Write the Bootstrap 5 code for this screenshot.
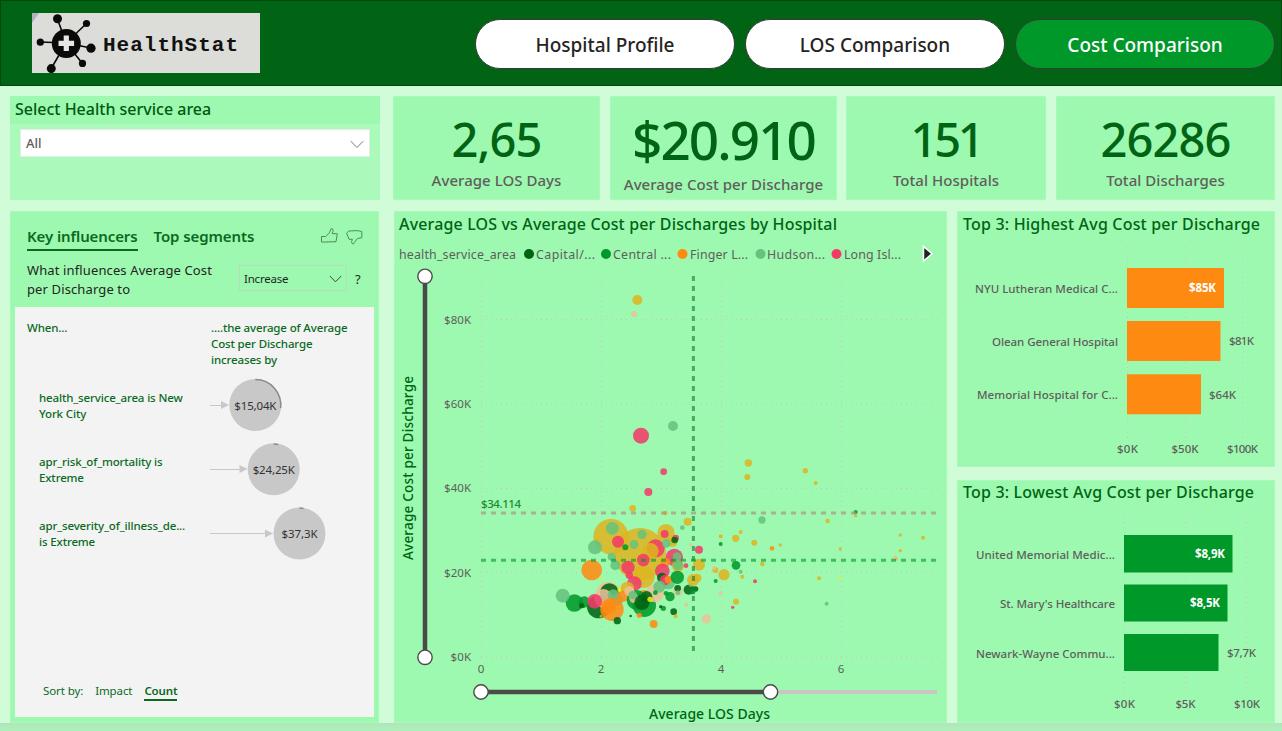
<!DOCTYPE html>
<html lang="en">
<head>
<meta charset="utf-8">
<meta name="viewport" content="width=device-width, initial-scale=1">
<title>HealthStat - Cost Comparison</title>
<link href="https://cdn.jsdelivr.net/npm/bootstrap@5.3.0/dist/css/bootstrap.min.css" rel="stylesheet">
<style>
  :root { --deep: #006414; --panel: #9cf9af; --muted: #605e5c; }
  body { background: #d0fcd8; font-family: "Noto Sans", "Open Sans", sans-serif; font-weight: 500; color: var(--deep); width: 1282px; height: 731px; overflow: hidden; }
  .topbar { height: 86px; background: var(--deep); border: 1px solid #004a10; padding: 0 6px 0 31px; }
  .brand-box { width: 228px; height: 60px; background: #dcdcd8; }
  .pill { width: 260px; height: 50px; border: 1px solid #3a3a3a; border-radius: 25px; font-size: 19px; line-height: 26px; font-weight: 550; color: #252423; background: #fff; padding: 12px 0 0; letter-spacing: 0; }
  .pill:hover { background: #fff; color: #252423; }
  .pill.current { background: #009829; color: #fff; }
  .tile { background: var(--panel); border: 1px solid #a8fab8; }
  .tile-title { font-size: 16px; line-height: 26px; padding-left: 5px; white-space: nowrap; font-weight: 550; }
  .slicer { width: 370px; height: 104px; background: #abfabc; }
  .slicer .tile-title { height: 28px; background: var(--panel); color: #005a12; }
  .picker { height: 28px; margin: 5px 10px 0; background: #fff; border: 1px solid #e3ece5; padding: 2px 5px 0; font-size: 13px; color: var(--muted); font-weight: 500; }
  .kpi { height: 104px; padding-top: 9px; text-align: center; }
  .kpi b { display: block; font-size: 47px; line-height: 67px; letter-spacing: -.9px; font-weight: 550; }
  .kpi b.tight { letter-spacing: -3.2px; }
  .kpi span { display: block; font-size: 15px; line-height: 18px; letter-spacing: .04px; font-weight: 550; color: var(--muted); margin-top: -2px; }
  .kpi.wide b { font-size: 53px; line-height: 68px; letter-spacing: -1.9px; }
  .kpi.wide span { margin-top: 1px; }
  .influence { width: 369px; height: 512px; padding: 0 4px 4px; }
  .tabline { height: 44px; padding: 12px 11px 0 12px; }
  .tabline a { font-size: 15px; line-height: 24px; color: #0b6a1e; text-decoration: none; font-weight: 600; letter-spacing: -.1px; height: 27px; }
  .tabline a.on { border-bottom: 2px solid #0b6a1e; }
  .question { height: 51px; padding: 5px 11px 0 12px; font-size: 13px; line-height: 19px; color: #252423; font-weight: 400; letter-spacing: .12px; }
  .combo { width: 108px; height: 26px; border: 1px solid #b7dcbd; font-size: 11.5px; letter-spacing: -.2px; padding: 1px 4px 0 4px; margin: 4px 0 0 -1px; }
  .sheet { height: 410px; background: #f3f3f3; font-size: 11.5px; line-height: 16px; color: #0b6a1e; padding: 13px 12px 0; font-weight: 550; letter-spacing: -.14px; }
  .heads { height: 53px; }
  .factor { height: 64.2px; }
  .factor .what { width: 171px; padding: 17px 0 0 12px; white-space: nowrap; }
  .sorter { padding: 117px 0 0 16px; font-weight: 400; letter-spacing: -.1px; column-gap: 12px; }
  .sorter u { text-decoration: none; border-bottom: 2px solid #0b6a1e; font-weight: 600; padding-bottom: 0; letter-spacing: -.15px; }
  .scatter { width: 553px; height: 512px; }
  .side { width: 318px; }
  svg text { font-family: "Noto Sans", "Open Sans", sans-serif; }
  svg.plot { display: block; margin: -1px; }
  .head { font-size: 16px; font-weight: 550; fill: var(--deep); }
  .axis { font-size: 11.5px; fill: var(--muted); font-weight: 400; }
  .axis.med { font-weight: 550; }
  .legend { font-size: 12.4px; fill: var(--muted); font-weight: 400; }
  .dots { stroke: #c8c6c4; stroke-width: 1; stroke-dasharray: 1 4; fill: none; }
  .pagefoot { height: 8px; background: linear-gradient(#b0e4bb, #acf2ba); }
</style>
</head>
<body>
<header class="topbar d-flex align-items-center justify-content-between">
  <div class="brand-box">
    <svg width="228" height="60" viewBox="32 13 228 60">
      <path d="M32 13h7l-7 10z" fill="#aab4bd"/>
      <g stroke="#0a0a0a" stroke-width="1.6"><path d="M66 43 57.500 19M66 43 86.500 23.500M66 43 40 42M66 43 91 48M66 43 82.500 63.500M66 43 51.500 68"/></g>
      <g fill="#0a0a0a"><circle cx="66.300" cy="43.500" r="14.500"/><circle cx="57.500" cy="18.800" r="4.500"/><circle cx="86.500" cy="23.500" r="3.600"/><circle cx="40.300" cy="42.200" r="3.600"/><circle cx="91" cy="48.200" r="4.600"/><circle cx="82.500" cy="63.400" r="3.600"/><circle cx="51.300" cy="68.600" r="4.500"/></g>
      <path d="M63.700 35.500h5.200v5.200h5.200v5.200h-5.200v5.200h-5.200v-5.200h-5.200v-5.200h5.200z" fill="#e6e6e2"/>
      <text x="103" y="51" textLength="135" font-size="21" font-weight="700" fill="#111" style="font-family:'Courier New','Liberation Mono',monospace">HealthStat</text>
    </svg>
  </div>
  <nav class="d-flex" style="gap:10px;padding-top:2px">
    <a class="btn pill" href="#">Hospital Profile</a>
    <a class="btn pill" href="#">LOS Comparison</a>
    <a class="btn pill current" href="#">Cost Comparison</a>
  </nav>
</header>

<main class="d-flex flex-column" style="padding:10px 7px 0 10px;height:637px;gap:11px">
  <div class="d-flex">
    <section class="slicer">
      <div class="tile-title">Select Health service area</div>
      <div class="picker d-flex justify-content-between align-items-center">
        <span>All</span>
        <svg width="14" height="9" viewBox="0 0 14 9"><path d="M.8 1.200 7 7.500 13.200 1.200" fill="none" stroke="#777" stroke-width="1"/></svg>
      </div>
    </section>
    <div class="tile kpi" style="width:207px;margin-left:13px"><b>2,65</b><span>Average LOS Days</span></div>
    <div class="tile kpi wide" style="width:227px;margin-left:10px"><b>$20.910</b><span>Average Cost per Discharge</span></div>
    <div class="tile kpi" style="width:200px;margin-left:9px"><b class="tight">151</b><span>Total Hospitals</span></div>
    <div class="tile kpi" style="width:219px;margin-left:10px"><b>26286</b><span>Total Discharges</span></div>
  </div>

  <div class="d-flex">
    <section class="tile influence">
      <div class="tabline d-flex">
        <a class="on" href="#">Key influencers</a>
        <a href="#" class="ms-3">Top segments</a>
        <svg class="ms-auto" style="margin-top:2px" width="43" height="20" viewBox="320 225 43 20" fill="none" stroke="#4f8a59" stroke-width="1">
          <path d="M321.500 235.500h4.200l3.600-3.600 1.900-4.400c2.200 0 2.400 2.200 1 5.200h5.100l-1.300 8-10.300.3h-4.200z"/>
          <path d="M361.800 230.500v6.200l-4.300.8-3.300 4.200-.8 1.300c-2.300-.2-2.200-2-1-4.600l-3.400-.2-2.500-6 2.400-2.200 8.500-.4z"/>
        </svg>
      </div>
      <div class="question d-flex">
        <div style="width:213px">What influences Average Cost<br>per Discharge to</div>
        <div class="combo d-flex justify-content-between align-items-center"><span>Increase</span>
          <svg width="13" height="8" viewBox="0 0 13 8"><path d="M.8 1 6.500 6.800 12.200 1" fill="none" stroke="#444"/></svg></div>
        <span style="padding:9px 0 0 8px">?</span>
      </div>
      <div class="sheet">
        <div class="heads d-flex"><div style="width:184px">When...</div><div>....the average of Average<br>Cost per Discharge<br>increases by</div></div>
        <div class="factor d-flex"><div class="what">health_service_area is New<br>York City</div>
          <svg width="150" height="64" viewBox="198 373 150 64"><path d="M210 405.500h12" stroke="#c8c8c8"/><path d="M221 401v8l8-4z" fill="#c8c8c8"/><circle cx="255.300" cy="405" r="26" fill="#c8c8c8"/><path d="M255.300 379.600a25.400 25.400 0 0 1 25.300 28.500" fill="none" stroke="#8b8b8b" stroke-width="1.500"/><text x="255.300" y="409.500" text-anchor="middle" textLength="42" font-size="11.500" font-weight="400" fill="#333">$15,04K</text></svg></div>
        <div class="factor d-flex"><div class="what">apr_risk_of_mortality is<br>Extreme</div>
          <svg width="150" height="64" viewBox="198 437 150 64"><path d="M210 469.500h30" stroke="#c8c8c8"/><path d="M239.500 465v8l8-4z" fill="#c8c8c8"/><circle cx="273.700" cy="469.300" r="26" fill="#c8c8c8"/><path d="M273.700 444a25.400 25.400 0 0 1 4.500.4" fill="none" stroke="#8b8b8b" stroke-width="1.500"/><text x="273.700" y="473.700" text-anchor="middle" textLength="42" font-size="11.500" font-weight="400" fill="#333">$24,25K</text></svg></div>
        <div class="factor d-flex"><div class="what">apr_severity_of_illness_de...<br>is Extreme</div>
          <svg width="150" height="64" viewBox="198 501 150 64"><path d="M210 533.500h56" stroke="#c8c8c8"/><path d="M265 529.500v8l8-4z" fill="#c8c8c8"/><circle cx="299.500" cy="533.500" r="26" fill="#c8c8c8"/><path d="M299.500 508.100a25.400 25.400 0 0 1 4 .4" fill="none" stroke="#8b8b8b" stroke-width="1.500"/><text x="299.500" y="538" text-anchor="middle" textLength="36" font-size="11.500" font-weight="400" fill="#333">$37,3K</text></svg></div>
        <div class="sorter d-flex"><span>Sort by:</span><span>Impact</span><u>Count</u></div>
      </div>
    </section>

    <section class="tile scatter" style="margin-left:15px">
      <svg class="plot" id="scatter" width="553" height="512" viewBox="394 211 553 512">
        <text class="head" x="399" y="230" textLength="438">Average LOS vs Average Cost per Discharges by Hospital</text>
        <g class="legend">
          <text x="399" y="259" textLength="117">health_service_area</text>
          <text x="536" y="259" textLength="59">Capital/...</text>
          <text x="613" y="259" textLength="58">Central ...</text>
          <text x="690" y="259" textLength="58">Finger L...</text>
          <text x="767" y="259" textLength="58">Hudson...</text>
          <text x="844" y="259" textLength="57">Long Isl...</text>
        </g>
        <circle cx="529" cy="254" r="5" fill="#006414"/><circle cx="606" cy="254" r="5" fill="#009829"/><circle cx="682.500" cy="254" r="5" fill="#ff8a12"/><circle cx="760.500" cy="254" r="5" fill="#66c27e"/><circle cx="836.500" cy="254" r="5" fill="#f23a69"/>
        <path d="M923.500 246.500v14.500l8.500-7.200z" fill="#222" stroke="#fff" stroke-width="1.500"/>
        <g class="dots">
          <path d="M481.500 281v376M601.500 281v376M721.500 281v376M841.500 281v376"/>
          <path d="M481 319.500h457M481 404.500h457M481 488.500h457M481 572.500h457M481 657.500h457"/>
        </g>
        <g class="axis" text-anchor="end">
          <text x="471" y="324" textLength="27">$80K</text><text x="471" y="408" textLength="27">$60K</text><text x="471" y="492" textLength="27">$40K</text><text x="471" y="577" textLength="27">$20K</text><text x="471" y="661" textLength="20.500">$0K</text>
        </g>
        <g class="axis" text-anchor="middle"><text x="481" y="673">0</text><text x="601" y="673">2</text><text x="721" y="673">4</text><text x="841" y="673">6</text></g>
        <g id="bubbles" fill-opacity=".87"></g>
        <g fill="none" stroke-width="3">
          <path d="M693.400 276v380" stroke="#0c7a2c" stroke-opacity=".6" stroke-dasharray="5 5"/>
          <path d="M481 513h457" stroke="#b08a80" stroke-opacity=".65" stroke-dasharray="5 5"/>
          <path d="M481 560.300h457" stroke="#009829" stroke-opacity=".6" stroke-dasharray="5 5"/>
        </g>
        <text x="481" y="508" font-size="11.500" font-weight="550" fill="#1d8a34" textLength="40">$34.114</text>
        <path d="M425 276v381" stroke="#4a4a48" stroke-width="4.500"/>
        <path d="M481 692h290" stroke="#4a4a48" stroke-width="4.500"/><path d="M771 692h166" stroke="#c8c6c4" stroke-width="4"/>
        <g fill="#fff" stroke="#4a4a48" stroke-width="1.400"><circle cx="425" cy="276.300" r="7.200"/><circle cx="425" cy="657.300" r="7.200"/><circle cx="481" cy="692" r="7.200"/><circle cx="770.500" cy="692" r="7.200"/></g>
        <text x="709.500" y="719" text-anchor="middle" font-size="14" font-weight="550" fill="#006414" textLength="121">Average LOS Days</text>
        <text transform="translate(413 468) rotate(-90)" text-anchor="middle" font-size="13.500" font-weight="550" fill="#006414" textLength="184">Average Cost per Discharge</text>
      </svg>
    </section>

    <div class="side" style="margin-left:10px">
      <section class="tile" style="height:256px">
        <svg class="plot" width="318" height="256" viewBox="957 211 318 256">
          <text class="head" x="963" y="230" textLength="297">Top 3: Highest Avg Cost per Discharge</text>
          <path class="dots" d="M1127.500 247v191M1185.500 247v191M1242.500 247v191"/>
          <g fill="#ff8a12"><path d="M1127 268h97v40h-97zM1127 321h93.500v40h-93.500zM1127 374.300h74v40h-74z"/></g>
          <g class="axis med" text-anchor="end"><text x="1118" y="293" textLength="143">NYU Lutheran Medical C...</text><text x="1118" y="346" textLength="126">Olean General Hospital</text><text x="1118" y="399" textLength="141">Memorial Hospital for C...</text></g>
          <text class="axis" x="1216" y="292" text-anchor="end" textLength="27" style="fill:#fff;font-weight:700">$85K</text>
          <text class="axis med" x="1229" y="345" textLength="25">$81K</text><text class="axis med" x="1209" y="399" textLength="27">$64K</text>
          <g class="axis med" text-anchor="middle"><text x="1127.500" y="453" textLength="21">$0K</text><text x="1185" y="453" textLength="27">$50K</text><text x="1242.500" y="453" textLength="31">$100K</text></g>
        </svg>
      </section>
      <section class="tile" style="height:243px;margin-top:13px">
        <svg class="plot" width="318" height="243" viewBox="957 480 318 243">
          <text class="head" x="963" y="498" textLength="291">Top 3: Lowest Avg Cost per Discharge</text>
          <path class="dots" d="M1124.500 517v177M1185.500 517v177M1246.500 517v177"/>
          <g fill="#009829"><path d="M1124 535h108.500v37.500h-108.500zM1124 584.500h103.500v37h-103.500zM1124 634h94.500v37h-94.500z"/></g>
          <g class="axis med" text-anchor="end"><text x="1115" y="559" textLength="139">United Memorial Medic...</text><text x="1115" y="608" textLength="115">St. Mary's Healthcare</text><text x="1115" y="658" textLength="139">Newark-Wayne Commu...</text></g>
          <g class="axis" text-anchor="end" style="fill:#fff;font-weight:700"><text x="1225" y="558" textLength="30">$8,9K</text><text x="1220" y="607" textLength="30">$8,5K</text></g>
          <text class="axis med" x="1227" y="657" textLength="29">$7,7K</text>
          <g class="axis med" text-anchor="middle"><text x="1124.500" y="708" textLength="21">$0K</text><text x="1185.500" y="708" textLength="20">$5K</text><text x="1247" y="708" textLength="26">$10K</text></g>
        </svg>
      </section>
    </div>
  </div>
</main>
<footer class="pagefoot"></footer>

<script src="https://cdn.jsdelivr.net/npm/bootstrap@5.3.0/dist/js/bootstrap.bundle.min.js"></script>
<script>
  // One letter per health service area
  const colours = { y: '#deb421', h: '#66c27e', L: '#f23a69', C: '#009829', D: '#006414', F: '#ff8a12', p: '#ecc09a', b: '#f0f000' };
  // Bubble groups: origin in chart units, then x, y, radius in thirds of a unit
  const groups = [
    { x: 540, y: 480, d: 'y 213 170 53;y 300 222 78;y 310 290 34;y 378 158 26;y 397 186 15;h 217 145 19;h 165 202 21;L 234 185 18;C 256 202 9;h 306 163 14;h 282 193 13;L 374 162 12;L 347 205 27;y 331 214 25;L 310 240 19;h 215 230 12;h 226 256 15;L 264 262 20;L 268 286 11;L 283 311 22;y 262 325 20;L 407 174 10;D 404 180 10;h 379 190 13;L 403 232 26;y 414 258 18;h 411 230 13;h 414 256 15;F 376 248 14;L 367 273 22;D 366 293 15;h 385 308 20;L 375 300 16;F 385 299 11;C 412 292 20;F 155 270 31;p 205 340 35;D 208 338 28;D 176 380 35;p 190 355 28;h 220 345 17;h 232 358 18;C 103 369 26;C 133 366 17;D 125 377 8;h 68 347 21;L 164 364 22;F 216 388 35;F 207 383 21;y 183 409 4;F 249 349 17;D 232 422 11;F 312 350 20;C 290 360 30;C 313 376 35;p 282 355 14;p 268 334 15;p 345 340 27;h 278 345 13;h 358 320 18;C 346 338 7;D 306 367 23;D 320 350 17;b 330 358 8;b 182 293 4;b 238 329 6;F 298 406 8;D 272 408 4;p 414 334 14;D 413 325 10;h 414 338 7;C 390 350 14;C 378 340 7;D 446 329 15;D 467 327 8;C 458 335 8;h 452 315 6;C 370 385 8;D 362 380 5;D 401 395 10;y 407 409 6;F 341 432 12;p 439 375 6;p 499 417 14;L 325 36 12;y 278 85 10;y 376 99 7;y 443 125 12;h 427 143 7;p 452 194 5;L 477 209 12;L 438 257 7;y 477 254 18;y 459 300 18;y 472 294 13' },
    { x: 690, y: 440, d: 'y 175 69 11;y 172 111 9;y 346 92 8;y 377 129 6;C 497 216 6;y 497 227 5;h 216 240 11;y 413 243 7;y 152 276 6;y 92 289 6;y 137 295 11;C 92 312 6;y 193 308 9;F 246 325 7;y 271 315 5;y 451 327 5;y 631 285 5;y 699 293 6;y 631 332 5;y 617 356 6;p 616 352 6;C 138 376 13;y 217 372 7;y 76 390 9;p 72 384 6;y 102 404 17;h 152 395 6;y 157 410 6;C 77 423 6;L 195 424 6;y 387 415 6;b 451 415 4;p 92 460 6;y 138 485 9;L 128 502 5;h 410 491 6' },
    { x: 390, y: 260, d: 'y 742 120 15;p 732 162 9;h 849 498 15;L 753 527 24;L 821 635 10' }
  ];
  const layer = document.getElementById('bubbles');
  for (const g of groups) for (const item of g.d.split(';')) {
    const [c, x, y, r] = item.split(' ');
    const dot = document.createElementNS('http://www.w3.org/2000/svg', 'circle');
    dot.setAttribute('cx', g.x + x / 3);
    dot.setAttribute('cy', g.y + y / 3);
    dot.setAttribute('r', r / 3);
    dot.setAttribute('fill', colours[c]);
    layer.append(dot);
  }
</script>
</body>
</html>
